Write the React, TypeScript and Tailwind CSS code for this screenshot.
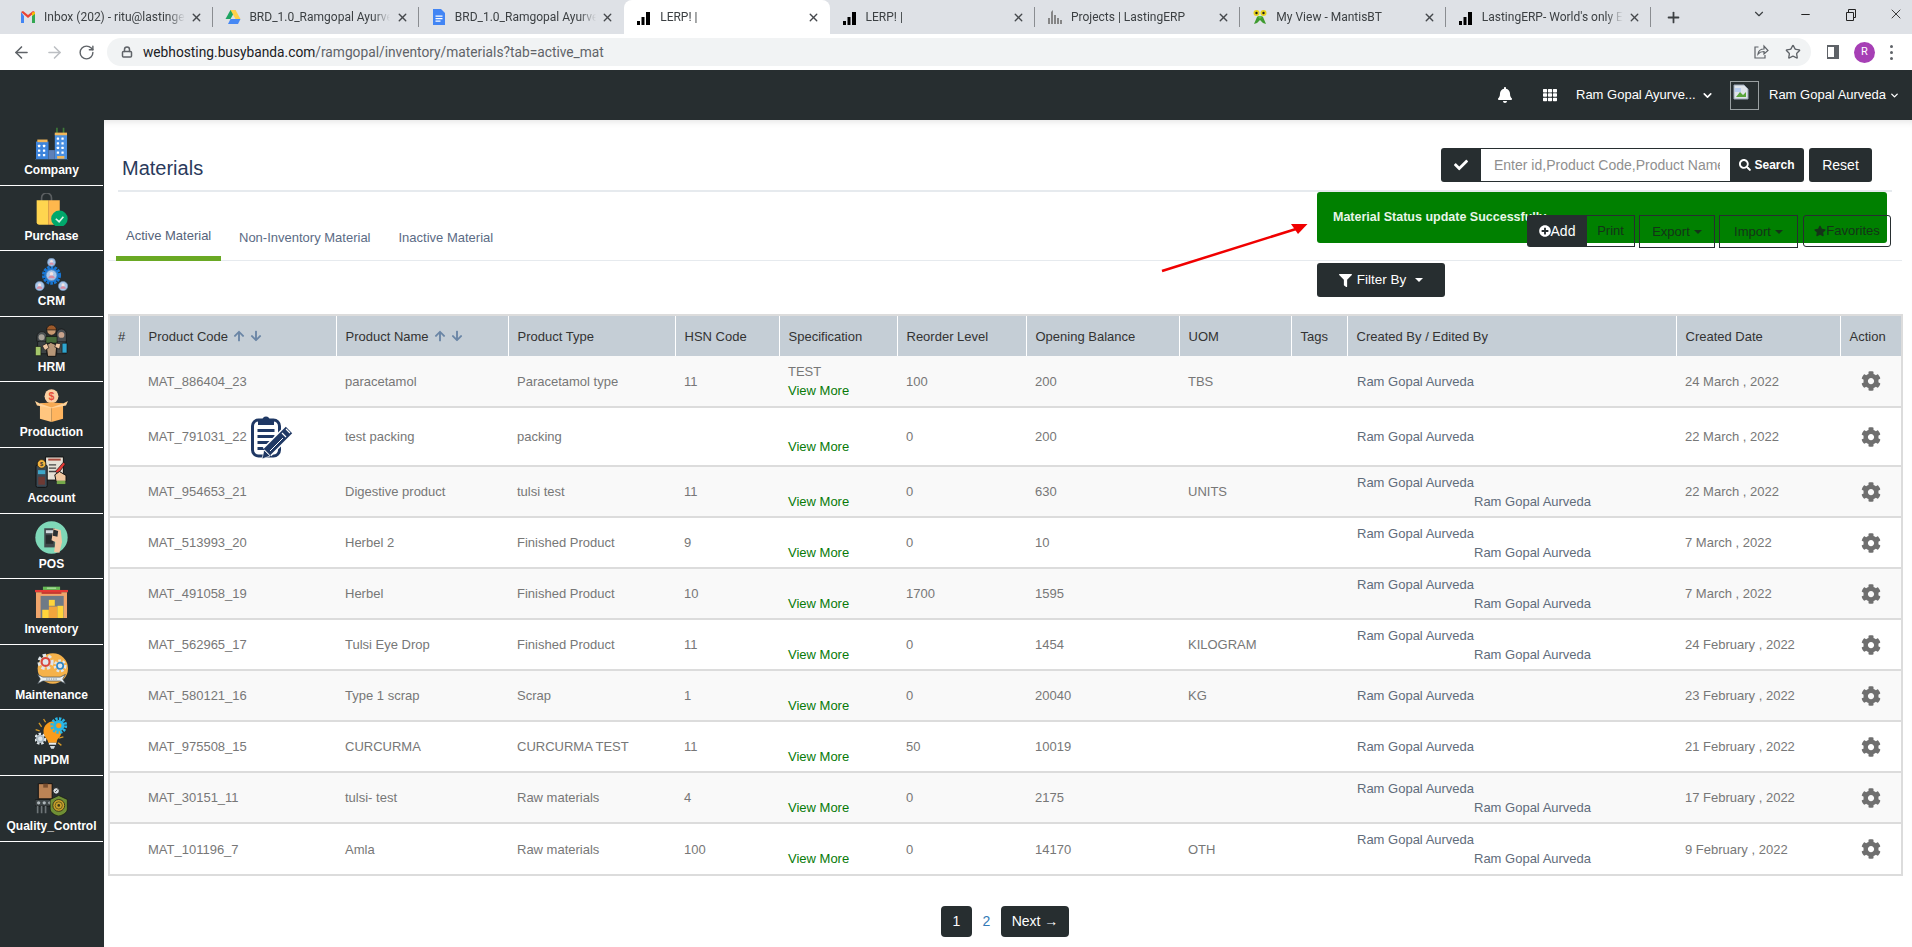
import { ArrowLeft, ArrowRight, ChevronDown, Lock, Minus, Plus, RotateCw, Star, X } from "lucide-react";
import { FaArrowDown, FaArrowUp, FaBell, FaCheck, FaCog, FaFilter, FaPlusCircle, FaSearch, FaStar, FaTh } from "react-icons/fa";

const Bars = () => (
  <svg viewBox="0 0 16 16" className="h-4 w-4 shrink-0">
    <path d="M1 12h3v4H1zM5.500 8h3v8h-3zM10 3h4v13h-4z" fill="#000" />
  </svg>
);

const GmailIcon = () => (
  <svg viewBox="0 0 16 16" className="h-4 w-4 shrink-0">
    <path d="M1 3v11h3V7z" fill="#4285f4" />
    <path d="M12 7v7h3V3z" fill="#34a853" />
    <path d="M1 3l7 6 7-6-2-1-5 4-5-4z" fill="#ea4335" />
    <path d="M12 3.500V7l3-2V3z" fill="#fbbc04" />
  </svg>
);

const DriveIcon = () => (
  <svg viewBox="0 0 16 16" className="h-4 w-4 shrink-0">
    <path d="M5.500 1h5l-5 9H.500z" fill="#1fa463" />
    <path d="M10.500 1l5 9h-5l-5-9z" fill="#ffd04b" />
    <path d="M3 15l2.500-5h10L13 15z" fill="#4688f4" />
  </svg>
);

const DocsIcon = () => (
  <svg viewBox="0 0 16 16" className="h-4 w-4 shrink-0">
    <path d="M2 0h8l4 4v12H2z" fill="#4285f4" />
    <path d="M4.500 6.500h7v1.200h-7zM4.500 9h7v1.200h-7zM4.500 11.500h5v1.200h-5z" fill="#fff" />
  </svg>
);

const ProjectsIcon = () => (
  <svg viewBox="0 0 16 16" className="h-4 w-4 shrink-0">
    <path d="M1 15V9h2v6zM4 15V3l2-2v14zM7 15V6h2v9zM10 15V9h2v6zM13 15v-4h2v4z" fill="#6f6f6f" opacity="0.8" />
  </svg>
);

const MantisIcon = () => (
  <svg viewBox="0 0 16 16" className="h-4 w-4 shrink-0">
    <path d="M2 15l3-7h6l3 7-3-1-3-3-3 3z" fill="#3f9b2f" />
    <circle cx="4.500" cy="4" r="3" fill="#e8d21d" />
    <circle cx="11.500" cy="4" r="3" fill="#e8d21d" />
    <circle cx="4.500" cy="4" r="1.200" fill="#1c1c1c" />
    <circle cx="11.500" cy="4" r="1.200" fill="#1c1c1c" />
    <path d="M5 7h6l-3 3z" fill="#5fbf43" />
  </svg>
);

const tabs = [
  { title: "Inbox (202) - ritu@lastingerp.com", icon: <GmailIcon /> },
  { title: "BRD_1.0_Ramgopal Ayurveda", icon: <DriveIcon /> },
  { title: "BRD_1.0_Ramgopal Ayurveda", icon: <DocsIcon /> },
  { title: "LERP! |", icon: <Bars />, active: true },
  { title: "LERP! |", icon: <Bars /> },
  { title: "Projects | LastingERP", icon: <ProjectsIcon /> },
  { title: "My View - MantisBT", icon: <MantisIcon /> },
  { title: "LastingERP- World's only ERP", icon: <Bars /> },
];

const BrowserChrome = () => (
  <div className="shrink-0 font-['Roboto',sans-serif]">
    <div className="flex h-[34px] items-stretch bg-[#dee1e6] pl-[8px]">
      {tabs.map((tab, i) => (
        <div
          key={i}
          className={`flex w-[205.400px] items-center pl-[12px] pr-[10px] ${tab.active ? "rounded-t-lg bg-white" : ""}`}
        >
          {tab.icon}
          <span className="ml-[8px] w-[141px] overflow-hidden whitespace-nowrap text-[12px] text-[#3c4043] [mask-image:linear-gradient(to_right,#000_88%,transparent)]">
            {tab.title}
          </span>
          <X size={13} strokeWidth={2.500} className="ml-auto text-[#45484c]" />
          {!tab.active && i !== 2 && <div className="ml-[9px] mr-[-10px] h-[20px] w-px bg-[#8a8d91]" />}
        </div>
      ))}
      <Plus size={17} strokeWidth={2.500} className="ml-[14px] self-center text-[#3c4043]" />
      <ChevronDown size={14} className="ml-[70px] mt-[7px] text-[#3c4043]" />
      <Minus size={13} className="ml-[33px] mt-[8px] text-[#222]" />
      <svg viewBox="0 0 12 12" className="ml-[33px] mt-[9px] h-[12px] w-[12px]" fill="none" stroke="#222">
        <path d="M1.500 3.500h7v8h-7zM3.500 3.500v-3h7v8h-2" />
      </svg>
      <X size={16} strokeWidth={1.300} className="ml-[31px] mt-[6px] text-[#222]" />
    </div>
    <div className="flex h-[36px] items-center bg-white">
      <ArrowLeft size={19} className="ml-[12px] text-[#5f6368]" />
      <ArrowRight size={19} className="ml-[14px] text-[#bcbfc3]" />
      <RotateCw size={17} className="ml-[14px] text-[#5f6368]" />
      <div className="ml-[12px] flex h-[28px] w-[1704px] items-center rounded-full bg-[#f1f3f4] pl-[14px]">
        <Lock size={12} strokeWidth={3} className="text-[#5f6368]" />
        <span className="ml-[10px] text-[13.750px] text-[#5f6368]">
          <span className="text-[#202124]">webhosting.busybanda.com</span>/ramgopal/inventory/materials?tab=active_mat
        </span>
        <svg viewBox="0 0 16 16" fill="none" stroke="#5f6368" strokeWidth="1.200" className="ml-auto h-[16px] w-[16px]">
          <path d="M5.500 3H2v11h10v-3" />
          <path d="M5 10c.5-3.500 3-5 6-5V2l4 4.500L11 10V7.500c-2.500 0-4.500.7-6 2.500z" />
        </svg>
        <Star size={16} className="ml-[16px] mr-[10px] text-[#5f6368]" />
      </div>
      <svg viewBox="0 0 14 16" className="ml-[15px] h-[16px] w-[14px]">
        <path d="M1 1h12v14H1zM2 3v10h6V3z" fill="#5f6368" fillRule="evenodd" />
      </svg>
      <div className="ml-[14px] flex h-[21px] w-[21px] items-center justify-center rounded-full bg-[#a63fb5] text-[11px] text-white">R</div>
      <div className="ml-[15px] flex flex-col gap-[3px]">
        <div className="h-[3px] w-[3px] rounded-full bg-[#5f6368]" />
        <div className="h-[3px] w-[3px] rounded-full bg-[#5f6368]" />
        <div className="h-[3px] w-[3px] rounded-full bg-[#5f6368]" />
      </div>
    </div>
  </div>
);

const Window = ({ x, y }: { x: number; y: number }) => <rect x={x} y={y} width="7" height="7" rx="1" fill="#fff" />;

const CompanyIcon = () => (
  <svg viewBox="0 0 100 100" className="h-full w-full">
    <path d="M64 2h5v18h-5zM84 2h5v18h-5z" fill="#3f7a3a" />
    <rect x="60" y="20" width="37" height="78" fill="#4a90e2" />
    <rect x="60" y="17" width="37" height="8" fill="#f0b65a" />
    <rect x="3" y="44" width="38" height="54" fill="#3d84dc" />
    <rect x="7" y="38" width="31" height="8" fill="#f0b65a" />
    <rect x="41" y="70" width="19" height="28" fill="#5d80b8" />
    {[32, 46, 60, 74].map((y) => [66, 80].map((x) => <Window key={`${x}-${y}`} x={x} y={y} />))}
    {[54, 68, 82].map((y) => [9, 24].map((x) => <Window key={`${x}-${y}`} x={x} y={y} />))}
    <rect x="67" y="88" width="22" height="8" fill="#f0b65a" />
    <rect x="0" y="97" width="100" height="3" fill="#334a5f" />
  </svg>
);

const PurchaseIcon = () => (
  <svg viewBox="0 0 100 100" className="h-full w-full">
    <path d="M20 28V15a15 15 0 0 1 30 0v13" fill="none" stroke="#5b5f61" strokeWidth="5" />
    <path d="M5 22h35v74H12a7 7 0 0 1-7-7z" fill="#ffd54f" />
    <path d="M40 22h35v67a7 7 0 0 1-7 7H40z" fill="#ffb74d" />
    <circle cx="74" cy="78" r="25" fill="#00a86b" />
    <path d="M63 78l10 9 13-15" fill="none" stroke="#d5f5e8" strokeWidth="5" />
  </svg>
);

const Person = ({ cx, cy, r }: { cx: number; cy: number; r: number }) => (
  <g>
    <circle cx={cx} cy={cy} r={r} fill="#a9c7ea" stroke="#6f8fb8" strokeWidth="2" />
    <circle cx={cx} cy={cy - r * 0.25} r={r * 0.35} fill="#f1e2e2" />
    <path d={`M${cx - r * 0.6} ${cy + r * 0.6}a${r * 0.6} ${r * 0.55} 0 0 1 ${r * 1.2} 0z`} fill="#d98ca2" />
  </g>
);

const CrmIcon = () => (
  <svg viewBox="0 0 100 100" className="h-full w-full">
    <circle cx="50" cy="52" r="24" fill="none" stroke="#1976d2" strokeWidth="10" strokeDasharray="8 3" />
    <circle cx="50" cy="52" r="22" fill="#1976d2" />
    <Person cx={50} cy={52} r={16} />
    <Person cx={50} cy={13} r={12} />
    <Person cx={14} cy={85} r={14} />
    <Person cx={85} cy={85} r={14} />
  </svg>
);

const HrmIcon = () => (
  <svg viewBox="0 0 100 100" className="h-full w-full">
    <path d="M8 90V55l14-10 14 10v35z" fill="#3c4244" stroke="#111" strokeWidth="2" />
    <path d="M66 90V50l14-10 14 10v40z" fill="#454b4d" stroke="#111" strokeWidth="2" />
    <path d="M6 38a15 15 0 0 1 30 0v14H6z" fill="#4a5052" stroke="#111" strokeWidth="2" />
    <circle cx="20" cy="40" r="9" fill="#a8a29a" />
    <path d="M65 30a15 15 0 0 1 30 0v24H65z" fill="#4a4e52" stroke="#111" strokeWidth="2" />
    <circle cx="80" cy="33" r="9" fill="#c9a38c" />
    <circle cx="50" cy="20" r="14" fill="#c99a72" stroke="#111" strokeWidth="2" />
    <path d="M35 18a15 15 0 0 1 30 0z" fill="#9c5a2b" stroke="#111" strokeWidth="2" />
    <path d="M33 38h34v20H33z" fill="#476b3a" stroke="#111" strokeWidth="2" />
    <path d="M34 64l14-8 18 8-3 34H38z" fill="#b79778" stroke="#111" strokeWidth="3" />
    <path d="M22 66l14-8 6 14-12 8zM78 60l-14-2-4 12 14 6z" fill="#f0c8a4" stroke="#111" strokeWidth="2" />
    <rect x="1" y="68" width="17" height="28" rx="2" fill="#a4c66a" stroke="#111" strokeWidth="2" />
    <rect x="82" y="58" width="15" height="30" rx="2" fill="#2fa5cf" stroke="#111" strokeWidth="2" />
  </svg>
);

const ProductionIcon = () => (
  <svg viewBox="0 0 100 100" className="h-full w-full">
    <circle cx="50" cy="22" r="21" fill="#fbd0a4" />
    <text x="50" y="33" textAnchor="middle" fontSize="32" fontWeight="700" fill="#e8503a" fontFamily="Liberation Sans">$</text>
    <path d="M15 44h35v56l-35-10z" fill="#ffc67f" />
    <path d="M50 44h35v46l-35 10z" fill="#ffb55f" />
    <path d="M0 36l15 8h70l15-8-6 14-44 8-44-8z" fill="#ffd39a" />
    <path d="M15 44l35 12 35-12-35-4z" fill="#f5a952" />
  </svg>
);

const AccountIcon = () => (
  <svg viewBox="0 0 100 100" className="h-full w-full">
    <path d="M32 6h54v70H32z" fill="#e5e0d5" stroke="#111" strokeWidth="3" />
    <rect x="40" y="11" width="38" height="6" fill="#a84a3c" />
    <path d="M42 30h22M42 40h22M42 50h22" stroke="#444" strokeWidth="4" />
    <path d="M62 50l24-28 6 5-22 30z" fill="#e53935" stroke="#111" strokeWidth="2" />
    <path d="M60 60l14-10 20 12v18H64z" fill="#f0c79f" stroke="#111" strokeWidth="3" />
    <rect x="66" y="78" width="26" height="10" fill="#75a84a" />
    <rect x="3" y="30" width="34" height="68" rx="5" fill="#3b4a55" stroke="#111" strokeWidth="3" />
    <circle cx="20" cy="27" r="13" fill="#f3b43f" stroke="#111" strokeWidth="2" />
    <text x="20" y="33" textAnchor="middle" fontSize="17" fontWeight="700" fill="#333" fontFamily="Liberation Sans">$</text>
    <rect x="9" y="46" width="22" height="12" fill="#3ea7c9" />
    <rect x="10" y="66" width="20" height="24" fill="#6d3a34" />
  </svg>
);

const PosIcon = () => (
  <svg viewBox="0 0 100 100" className="h-full w-full">
    <circle cx="50" cy="50" r="49" fill="#7fd8b8" />
    <path d="M28 22h32v58H28z" fill="#41494c" />
    <rect x="33" y="28" width="22" height="9" fill="#cfd8dc" />
    <rect x="33" y="43" width="22" height="26" fill="#262c2e" />
    <path d="M56 22l22 6 4 36-8 32-16-2 4-30-12-6z" fill="#f2c6a2" />
    <path d="M56 26l14 4-2 18-14-3z" fill="#2b3133" />
  </svg>
);

const InventoryIcon = () => (
  <svg viewBox="0 0 100 100" className="h-full w-full">
    <rect x="24" y="2" width="52" height="10" fill="#66bb55" />
    <rect x="36" y="5" width="28" height="3" fill="#c5eab9" />
    <rect x="0" y="12" width="100" height="7" fill="#e53935" />
    <rect x="3" y="19" width="94" height="78" fill="#f0a56b" />
    <rect x="17" y="30" width="70" height="67" fill="#6f7a86" />
    <path d="M20 18h60v6H20z" fill="#c63a30" />
    <rect x="42" y="42" width="18" height="18" fill="#ffd43b" />
    <rect x="22" y="72" width="20" height="25" fill="#ffd43b" />
    <rect x="42" y="62" width="26" height="35" fill="#f3a53c" />
    <rect x="68" y="60" width="18" height="37" fill="#ffd43b" />
  </svg>
);

const GearShape = ({ cx, cy, r, color }: { cx: number; cy: number; r: number; color: string }) => (
  <g>
    <circle cx={cx} cy={cy} r={r} fill="none" stroke="#dfe6ea" strokeWidth={r * 0.45} strokeDasharray={`${r * 0.5} ${r * 0.35}`} />
    <circle cx={cx} cy={cy} r={r * 0.8} fill="#dfe6ea" />
    <circle cx={cx} cy={cy} r={r * 0.6} fill="none" stroke={color} strokeWidth={r * 0.32} />
  </g>
);

const MaintenanceIcon = () => (
  <svg viewBox="0 0 100 100" className="h-full w-full">
    <circle cx="54" cy="50" r="46" fill="#f6b24a" />
    <GearShape cx={32} cy={30} r={20} color="#d9473b" />
    <GearShape cx={76} cy={42} r={16} color="#2f86c4" />
    <path d="M8 68l16 8h52l16-8-8 14 8 14-16-8H24L8 96l8-14z" fill="#e8eef0" stroke="#39414a" strokeWidth="2" />
    <path d="M34 82h32" stroke="#7b8790" strokeWidth="3" strokeDasharray="4 3" />
  </svg>
);

const NpdmIcon = () => (
  <svg viewBox="0 0 100 100" className="h-full w-full">
    <path d="M12 18l8 12M2 38l12 4M72 64l14-4M70 78l10 8M26 6l6 10" stroke="#d89a26" strokeWidth="4" />
    <GearShape cx={16} cy={66} r={15} color="#aab8c2" />
    <path d="M50 14a30 30 0 0 1 22 50c-6 6-6 10-6 14H40c0-4-2-10-8-16a30 30 0 0 1 18-48z" fill="#f99b1c" />
    <rect x="42" y="78" width="22" height="6" fill="#e8eef0" />
    <path d="M45 88h16l-4 8h-8z" fill="#cfd8dc" />
    <circle cx="72" cy="26" r="21" fill="none" stroke="#29b6e6" strokeWidth="9" strokeDasharray="7 4" />
    <circle cx="72" cy="26" r="17" fill="#29b6e6" />
    <circle cx="72" cy="26" r="8" fill="#f99b1c" />
  </svg>
);

const QualityIcon = () => (
  <svg viewBox="0 0 100 100" className="h-full w-full">
    <path d="M10 2h42v46H10z" fill="#bb8355" stroke="#111" strokeWidth="3" />
    <path d="M25 2h14v12H25z" fill="#7a4f30" />
    <circle cx="64" cy="24" r="10" fill="#d7dde0" stroke="#111" strokeWidth="3" />
    <path d="M60 28l8-8" stroke="#111" strokeWidth="2" />
    <rect x="0" y="50" width="55" height="20" rx="3" fill="#3f4648" stroke="#111" strokeWidth="2" />
    <circle cx="11" cy="60" r="5" fill="#aeb6ba" />
    <circle cx="28" cy="60" r="5" fill="#aeb6ba" />
    <circle cx="45" cy="60" r="5" fill="#aeb6ba" />
    <path d="M8 70v22M20 70v22M32 70v22" stroke="#6d7477" strokeWidth="5" />
    <path d="M72 38l26 12v28c0 12-14 20-26 22-12-2-26-10-26-22V50z" fill="#6f8f35" stroke="#111" strokeWidth="2" />
    <circle cx="72" cy="68" r="18" fill="#c9a12a" stroke="#3b3b1c" strokeWidth="3" />
    <circle cx="72" cy="68" r="11" fill="none" stroke="#3b3b1c" strokeWidth="2" />
    <circle cx="72" cy="68" r="4" fill="#3b3b1c" />
  </svg>
);

const modules = [
  { label: "Company", icon: <CompanyIcon /> },
  { label: "Purchase", icon: <PurchaseIcon /> },
  { label: "CRM", icon: <CrmIcon /> },
  { label: "HRM", icon: <HrmIcon /> },
  { label: "Production", icon: <ProductionIcon /> },
  { label: "Account", icon: <AccountIcon /> },
  { label: "POS", icon: <PosIcon /> },
  { label: "Inventory", icon: <InventoryIcon /> },
  { label: "Maintenance", icon: <MaintenanceIcon /> },
  { label: "NPDM", icon: <NpdmIcon /> },
  { label: "Quality_Control", icon: <QualityIcon /> },
];

const Sidebar = () => (
  <div className="w-[104px] shrink-0 bg-[#272e30] pr-px">
    {modules.map((item) => (
      <div key={item.label} className="flex h-[65.600px] flex-col items-center border-b border-white pt-[7px]">
        <div className="h-[33px] w-[33px]">{item.icon}</div>
        <span className="mt-[3px] whitespace-nowrap text-[12px] font-bold leading-[14px] text-white">{item.label}</span>
      </div>
    ))}
  </div>
);

const ClipboardIcon = () => (
  <svg viewBox="0 0 44 44" className="absolute left-[251px] top-[415px] z-20 h-[44px] w-[44px]">
    <rect x="1.500" y="5" width="27" height="36" rx="6" fill="#fff" stroke="#1f3864" strokeWidth="3" />
    <path d="M7 10V5h4.500a3.500 3.500 0 0 1 7 0H23v5z" fill="#1f3864" />
    <path d="M6.500 14h17v3h-17zM6.500 20h17v3h-17zM6.500 26h13v3h-13zM6.500 32h8v3h-8z" fill="#1f3864" />
    <path d="M16 37L38 15" stroke="#fff" strokeWidth="12" />
    <path d="M16 37L38 15" stroke="#1f3864" strokeWidth="9" />
    <path d="M11 44l2-9 6 6z" fill="#1f3864" stroke="#fff" strokeWidth="0.700" />
    <path d="M31 18l4 4M35 14l4 4" stroke="#fff" strokeWidth="1.200" />
    <path d="M19 36L32 23" stroke="#fff" strokeWidth="1" />
  </svg>
);

const Caret = () => <span className="ml-[4px] inline-block h-0 w-0 border-x-[4px] border-t-[4px] border-x-transparent border-t-current align-middle" />;

const columns = [
  { title: "#", width: 30 },
  { title: "Product Code", width: 197, sort: true },
  { title: "Product Name", width: 172, sort: true },
  { title: "Product Type", width: 167 },
  { title: "HSN Code", width: 104 },
  { title: "Specification", width: 118 },
  { title: "Reorder Level", width: 129 },
  { title: "Opening Balance", width: 153 },
  { title: "UOM", width: 112 },
  { title: "Tags", width: 56 },
  { title: "Created By / Edited By", width: 329 },
  { title: "Created Date", width: 164 },
  { title: "Action", width: 62 },
];

const rows = [
  { code: "MAT_886404_23", name: "paracetamol", type: "Paracetamol type", hsn: "11", spec: "TEST", reorder: "100", balance: "200", uom: "TBS", edited: false, date: "24 March , 2022" },
  { code: "MAT_791031_22", name: "test packing", type: "packing", hsn: "", spec: "", reorder: "0", balance: "200", uom: "", edited: false, date: "22 March , 2022" },
  { code: "MAT_954653_21", name: "Digestive product", type: "tulsi test", hsn: "11", spec: "", reorder: "0", balance: "630", uom: "UNITS", edited: true, date: "22 March , 2022" },
  { code: "MAT_513993_20", name: "Herbel 2", type: "Finished Product", hsn: "9", spec: "", reorder: "0", balance: "10", uom: "", edited: true, date: "7 March , 2022" },
  { code: "MAT_491058_19", name: "Herbel", type: "Finished Product", hsn: "10", spec: "", reorder: "1700", balance: "1595", uom: "", edited: true, date: "7 March , 2022" },
  { code: "MAT_562965_17", name: "Tulsi Eye Drop", type: "Finished Product", hsn: "11", spec: "", reorder: "0", balance: "1454", uom: "KILOGRAM", edited: true, date: "24 February , 2022" },
  { code: "MAT_580121_16", name: "Type 1 scrap", type: "Scrap", hsn: "1", spec: "", reorder: "0", balance: "20040", uom: "KG", edited: false, date: "23 February , 2022" },
  { code: "MAT_975508_15", name: "CURCURMA", type: "CURCURMA TEST", hsn: "11", spec: "", reorder: "50", balance: "10019", uom: "", edited: false, date: "21 February , 2022" },
  { code: "MAT_30151_11", name: "tulsi- test", type: "Raw materials", hsn: "4", spec: "", reorder: "0", balance: "2175", uom: "", edited: true, date: "17 February , 2022" },
  { code: "MAT_101196_7", name: "Amla", type: "Raw materials", hsn: "100", spec: "", reorder: "0", balance: "14170", uom: "OTH", edited: true, date: "9 February , 2022" },
];

const rowHeight = (i: number) => {
  if (i === 1) return "h-[59px]";
  if (i === 9) return "h-[52px]";
  return "h-[51px]";
};

const MaterialsTable = () => (
  <table className="ml-[4px] w-[1793px] table-fixed border-collapse border-2 border-[#dcdcdc] text-[13px] leading-[19px]">
    <colgroup>
      {columns.map((col) => (
        <col key={col.title} style={{ width: col.width }} />
      ))}
    </colgroup>
    <thead>
      <tr className="h-[41px] bg-[#c5ced6] text-[#333]">
        {columns.map((col) => (
          <th key={col.title} className="border-l border-white pl-[9px] pr-[4px] text-left font-normal first:border-l-0 first:pl-[8px]">
            <span className="inline-flex items-center gap-[3px] whitespace-nowrap">
              {col.title}
              {col.sort && (
                <span className="ml-[2px] inline-flex gap-[5px] text-[#6b86a6]">
                  <FaArrowUp size={12} />
                  <FaArrowDown size={12} />
                </span>
              )}
            </span>
          </th>
        ))}
      </tr>
    </thead>
    <tbody className="text-[#777]">
      {rows.map((row, i) => (
        <tr key={row.code} className={`border-b-2 border-[#dcdcdc] ${rowHeight(i)} ${i % 2 === 0 ? "bg-[#f9f9f9]" : "bg-white"}`}>
          <td className="px-[8px]" />
          <td className="px-[9px]">{row.code}</td>
          <td className="px-[9px]">{row.name}</td>
          <td className="px-[9px]">{row.type}</td>
          <td className="px-[9px]">{row.hsn}</td>
          <td className="px-[9px]">
            <div className="h-[19px]">{row.spec}</div>
            <div className="text-[#087a08]">View More</div>
          </td>
          <td className="px-[9px]">{row.reorder}</td>
          <td className="px-[9px]">{row.balance}</td>
          <td className="px-[9px]">{row.uom}</td>
          <td className="px-[9px]" />
          <td className="pl-[10px] pr-[8px] text-[#5f6c7b]">
            <div>Ram Gopal Aurveda</div>
            {row.edited && <div className="pl-[117px]">Ram Gopal Aurveda</div>}
          </td>
          <td className="px-[9px]">{row.date}</td>
          <td className="px-[9px]">
            <FaCog size={20} className="ml-[12px] text-[#6f6f6f]" />
          </td>
        </tr>
      ))}
    </tbody>
  </table>
);

const OutlineButton = ({ children, className }: { children: React.ReactNode; className: string }) => (
  <div className={`flex items-center justify-center border border-[#272e30] text-[13px] text-[#143318] ${className}`}>{children}</div>
);

export default function App() {
  return (
    <div className="flex h-[947px] w-[1912px] flex-col overflow-hidden bg-white font-['Liberation_Sans',Arial,sans-serif]">
      <BrowserChrome />
      <header className="flex h-[50px] shrink-0 items-center bg-[#272e30] text-[13px] text-white">
        <FaBell size={16} className="ml-[1497px]" />
        <FaTh size={14} className="ml-[30px]" />
        <span className="ml-[19px] w-[120px] whitespace-nowrap">Ram Gopal Ayurve...</span>
        <ChevronDown size={13} strokeWidth={3} className="ml-[5px]" />
        <div className="ml-[16px] h-[29px] w-[29px] border border-[#9aa0a2] p-[2px]">
          <svg viewBox="0 0 16 16" className="h-4 w-4">
            <path d="M1 1h10l4 4v10H1z" fill="#dfe4ea" stroke="#9aa5b5" />
            <path d="M3 13l4-5 3 3 3-3v5z" fill="#5aa53c" />
            <path d="M2 4h6v4H2z" fill="#b8cdf0" />
          </svg>
        </div>
        <span className="ml-[10px] whitespace-nowrap">Ram Gopal Aurveda</span>
        <ChevronDown size={11} strokeWidth={3} className="ml-[3px]" />
      </header>
      <div className="flex min-h-0 flex-1">
        <Sidebar />
        <main className="min-w-0 flex-1 shadow-[inset_0_6px_6px_-4px_rgba(0,0,0,0.1)]">
          <div className="ml-[14px] mr-[20px] flex h-[72px] items-start justify-between border-b-2 border-[#e6eaee] pt-[28px]">
            <h1 className="ml-[4px] mt-[5px] text-[20px] leading-[30px] text-[#2a3a5c]">Materials</h1>
            <div className="mr-[20px] flex gap-[5px]">
              <div className="flex h-[34px] w-[363px] items-center rounded-[3px] bg-[#272e30] text-white">
                <div className="flex w-[40px] justify-center">
                  <FaCheck size={14} />
                </div>
                <input
                  placeholder="Enter id,Product Code,Product Name"
                  className="h-[32px] w-[249px] bg-white pl-[13px] pr-[10px] text-[14px] text-[#333] outline-none placeholder:text-[#8f8f8f]"
                />
                <div className="flex flex-1 items-center justify-center gap-[3px] text-[12px] font-bold">
                  <FaSearch size={12} />
                  Search
                </div>
              </div>
              <div className="flex h-[34px] w-[63px] items-center justify-center rounded-[3px] bg-[#272e30] text-[14px] text-white">Reset</div>
            </div>
          </div>

          <div className="relative ml-[4px] mr-[10px] flex h-[69px] justify-between border-b border-[#e6eaee]">
            <div className="flex text-[13px] text-[#5b6b85]">
              <div className="ml-[8px] h-[69px] w-[105px] border-b-[5px] border-[#6aa924] pl-[10px] pt-[36px] leading-[15px] text-[#55637a]">Active Material</div>
              <div className="ml-[18px] pt-[38px] leading-[15px]">Non-Inventory Material</div>
              <div className="ml-[28px] pt-[38px] leading-[15px]">Inactive Material</div>
            </div>
            <div className="absolute left-[1209px] top-0 h-[51px] w-[570px] rounded-[3px] bg-[#008000] pl-[16px] pt-[18px] text-[12.500px] font-bold leading-[15px] text-[#e8f5e8]">
              Material Status update Successfully
            </div>
            <div className="absolute left-[1419px] top-[23px] flex items-start">
              <div className="flex h-[32px] w-[60px] items-center justify-center rounded-l-[3px] bg-[#272e30] text-[14px] text-white">
                <FaPlusCircle size={12} />
                Add
              </div>
              <OutlineButton className="h-[32px] w-[48px] border-l-0">Print</OutlineButton>
              <OutlineButton className="ml-[4px] h-[33px] w-[76px]">
                Export
                <Caret />
              </OutlineButton>
              <OutlineButton className="ml-[4px] h-[33px] w-[79px]">
                Import
                <Caret />
              </OutlineButton>
              <OutlineButton className="ml-[5px] h-[32px] w-[88px] rounded-[3px]">
                <FaStar size={12} />
                Favorites
              </OutlineButton>
            </div>
          </div>

          <div className="ml-[1213px] mt-[2px] flex h-[34px] w-[128px] items-center justify-center rounded-[3px] bg-[#272e30] text-[13.500px] text-white">
            <FaFilter size={13} className="mr-[5px]" />
            Filter By
            <span className="ml-[9px] h-0 w-0 border-x-[4px] border-t-[4px] border-x-transparent border-t-white" />
          </div>

          <div className="mt-[17px]">
            <MaterialsTable />
          </div>

          <div className="mt-[30px] flex items-center justify-center pr-[6px] text-[14px]">
            <div className="flex h-[31px] w-[31px] items-center justify-center rounded-[4px] bg-[#272e30] text-white">1</div>
            <div className="w-[29px] text-center text-[#337ab7]">2</div>
            <div className="flex h-[31px] w-[68px] items-center justify-center rounded-[4px] bg-[#272e30] text-white">Next →</div>
          </div>
        </main>
      </div>
      <ClipboardIcon />
      <svg viewBox="0 0 160 60" className="absolute left-[1155px] top-[218px] z-20 h-[60px] w-[160px]">
        <path d="M7 53L141 11" stroke="#f00000" strokeWidth="2.500" />
        <path d="M152.500 6L136 6l7 10z" fill="#f00000" />
      </svg>
    </div>
  );
}
